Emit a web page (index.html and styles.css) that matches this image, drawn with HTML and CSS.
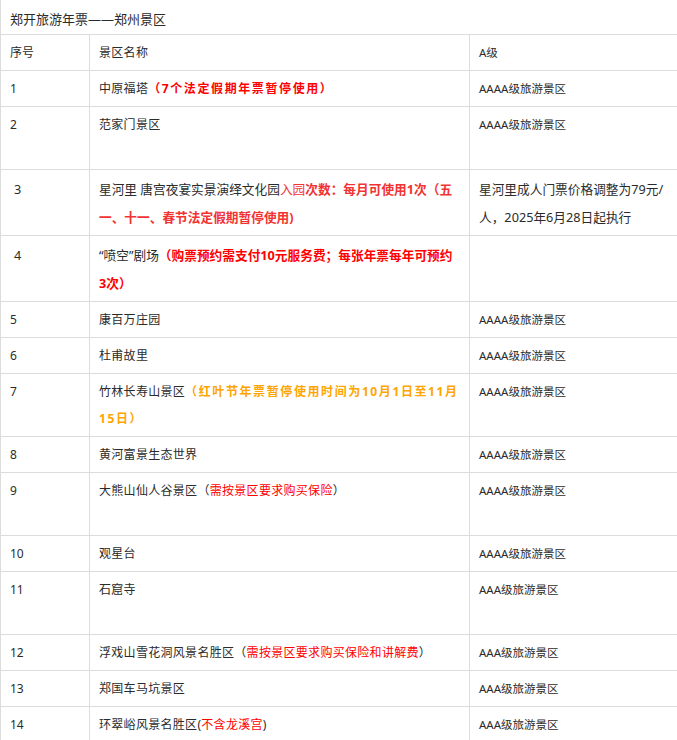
FILE: index.html
```html
<!DOCTYPE html>
<html lang="zh-CN">
<head>
<meta charset="utf-8">
<title>郑开旅游年票——郑州景区</title>
<link rel="stylesheet" href="styles.css">
</head>
<body>
<table class="scenic">
  <colgroup>
    <col class="c-no">
    <col class="c-name">
    <col class="c-level">
  </colgroup>
  <tr class="title-row"><td colspan="3" class="title">郑开旅游年票——郑州景区</td></tr>
  <tr class="head"><td>序号</td><td class="name">景区名称</td><td class="level">A级</td></tr>
  <tr><td>1</td><td class="name">中原福塔<b class="red wide">（7个法定假期年票暂停使用）</b></td><td class="level">AAAA级旅游景区</td></tr>
  <tr><td>2</td><td class="name"><div class="tall">范家门景区</div></td><td class="level">AAAA级旅游景区</td></tr>
  <tr class="big"><td>3</td><td class="nowrap">星河里 唐宫夜宴实景演绎文化园<span class="red2">入园<b>次数：每月可使用1次（五<br>一、十一、春节法定假期暂停使用)</b></span></td><td class="level nowrap">星河里成人门票价格调整为79元/<br>人，2025年6月28日起执行</td></tr>
  <tr class="big"><td>4</td><td class="nowrap">“喷空”剧场<b class="red">（购票预约需支付10元服务费；每张年票每年可预约<br>3次）</b></td><td class="level"></td></tr>
  <tr><td>5</td><td class="name">康百万庄园</td><td class="level">AAAA级旅游景区</td></tr>
  <tr><td>6</td><td class="name">杜甫故里</td><td class="level">AAAA级旅游景区</td></tr>
  <tr><td>7</td><td class="name nowrap">竹林长寿山景区<b class="orange wide">（红叶节年票暂停使用时间为10月1日至11月<br>15日）</b></td><td class="level">AAAA级旅游景区</td></tr>
  <tr><td>8</td><td class="name">黄河富景生态世界</td><td class="level">AAAA级旅游景区</td></tr>
  <tr><td>9</td><td class="name"><div class="tall">大熊山仙人谷景区（<span class="red">需按景区要求购买保险</span>）</div></td><td class="level">AAAA级旅游景区</td></tr>
  <tr><td>10</td><td class="name">观星台</td><td class="level">AAAA级旅游景区</td></tr>
  <tr><td>11</td><td class="name"><div class="tall">石窟寺</div></td><td class="level">AAA级旅游景区</td></tr>
  <tr><td>12</td><td class="name">浮戏山雪花洞风景名胜区（<span class="red">需按景区要求购买保险和讲解费</span>）</td><td class="level">AAA级旅游景区</td></tr>
  <tr><td>13</td><td class="name">郑国车马坑景区</td><td class="level">AAA级旅游景区</td></tr>
  <tr><td>14</td><td class="name">环翠峪风景名胜区(<span class="red">不含龙溪宫</span>)</td><td class="level">AAA级旅游景区</td></tr>
</table>
</body>
</html>
```
FILE: styles.css
```css
html, body {
  margin: 0;
  padding: 0;
  background: #fff;
}
body {
  font-family: "Noto Sans", "Noto Sans CJK SC", sans-serif;
  font-size: 12px;
  color: #2b2b2b;
}
.scenic {
  width: 677px;
  border-collapse: collapse;
  table-layout: fixed;
}
.c-no { width: 89px; }
.c-name { width: 380px; }
.c-level { width: 208px; }
.scenic td {
  border: 1px solid #dcdcdc;
  padding: 4px 9px;
  line-height: 27px;
  vertical-align: top;
  text-align: left;
  overflow: hidden;
}
.scenic .title-row td {
  border-top: none;
}
.scenic td.title {
  font-size: 13px;
  padding: 6px 9px 1px;
}
.scenic td.name {
  letter-spacing: 0.3px;
}
.scenic td.level {
  font-size: 11.5px;
}
.scenic td.nowrap {
  white-space: nowrap;
}
.tall {
  min-height: 54px;
}
.red {
  color: #ff0000;
}
.red2 {
  color: #f23333;
}
.orange {
  color: #ffa500;
}
b {
  font-weight: bold;
}
.scenic td.name b.wide {
  letter-spacing: 1.6px;
}
.scenic tr.big td {
  font-size: 12.7px;
  line-height: 28px;
  padding: 5px 9px 4px 13px;
}
.scenic tr.big td + td {
  padding-left: 9px;
}
.scenic tr.big td.level {
  font-size: 12.7px;
}
```
